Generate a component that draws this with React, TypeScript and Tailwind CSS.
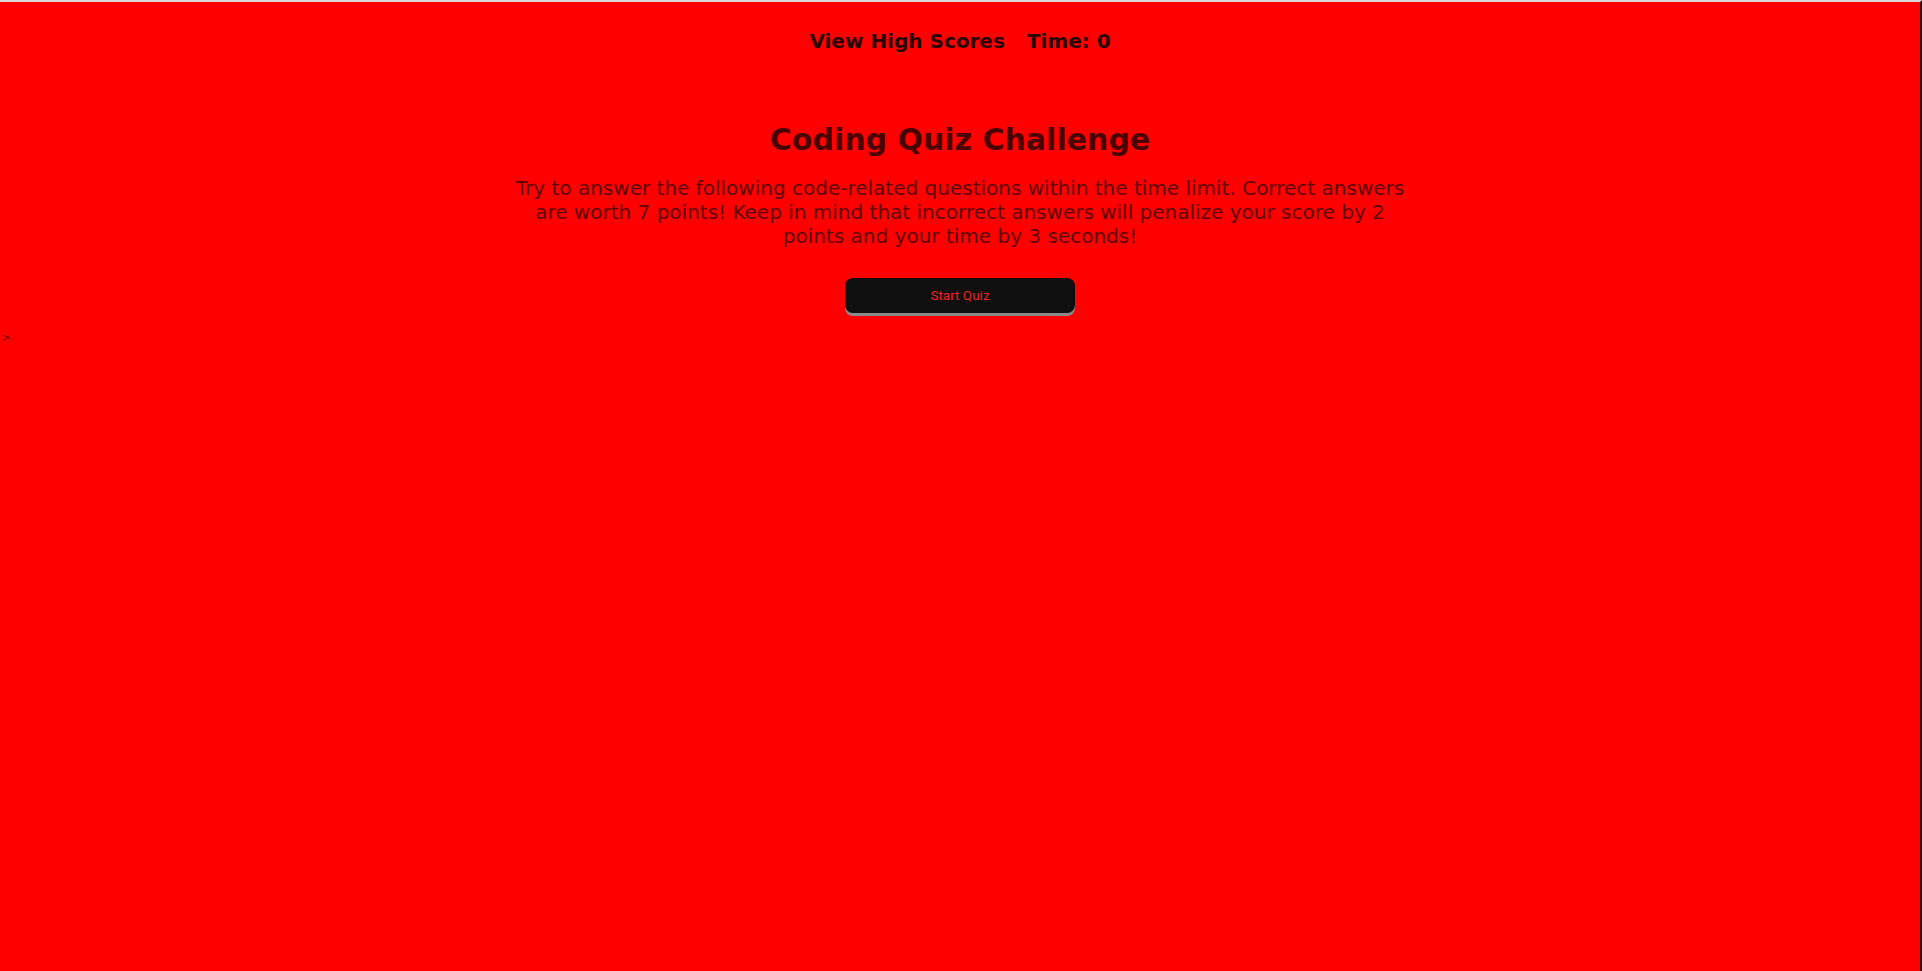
import React from "react";

export default function App() {
  return (
    <div className="relative min-h-[971px] w-full bg-[#fe0000] border-t-2 border-t-[#d9d9d9] border-r-2 border-r-[#3a0a0a] overflow-hidden font-['DejaVu_Sans',Verdana,sans-serif]">
      <header className="flex justify-center gap-[22px] pt-[27px] text-[20px] font-bold text-[#2a0000] leading-[24px]">
        <span>View High Scores</span>
        <span>Time: 0</span>
      </header>
      <main className="flex flex-col items-center">
        <h1 className="mt-[69px] text-[30px] font-bold leading-[36px] text-[#4a0000]">
          Coding Quiz Challenge
        </h1>
        <p className="mt-[18px] w-[912px] text-center text-[20px] leading-[24px] text-[#600000]">
          Try to answer the following code-related questions within the time limit. Correct answers are worth 7 points! Keep in mind that incorrect answers will penalize your score by 2 points and your time by 3 seconds!
        </p>
        <button className="mt-[30px] h-[35px] w-[230px] rounded-[8px] bg-[#0f0f0f] text-[13.5px] text-[#ee2424] shadow-[0_3px_0_#8a8a8a] font-['Roboto',Arial,sans-serif]">
          Start Quiz
        </button>
      </main>
      <div className="mt-[19px] pl-[2px] text-[10px] leading-[12px] text-[#600000]">&gt;</div>
    </div>
  );
}
